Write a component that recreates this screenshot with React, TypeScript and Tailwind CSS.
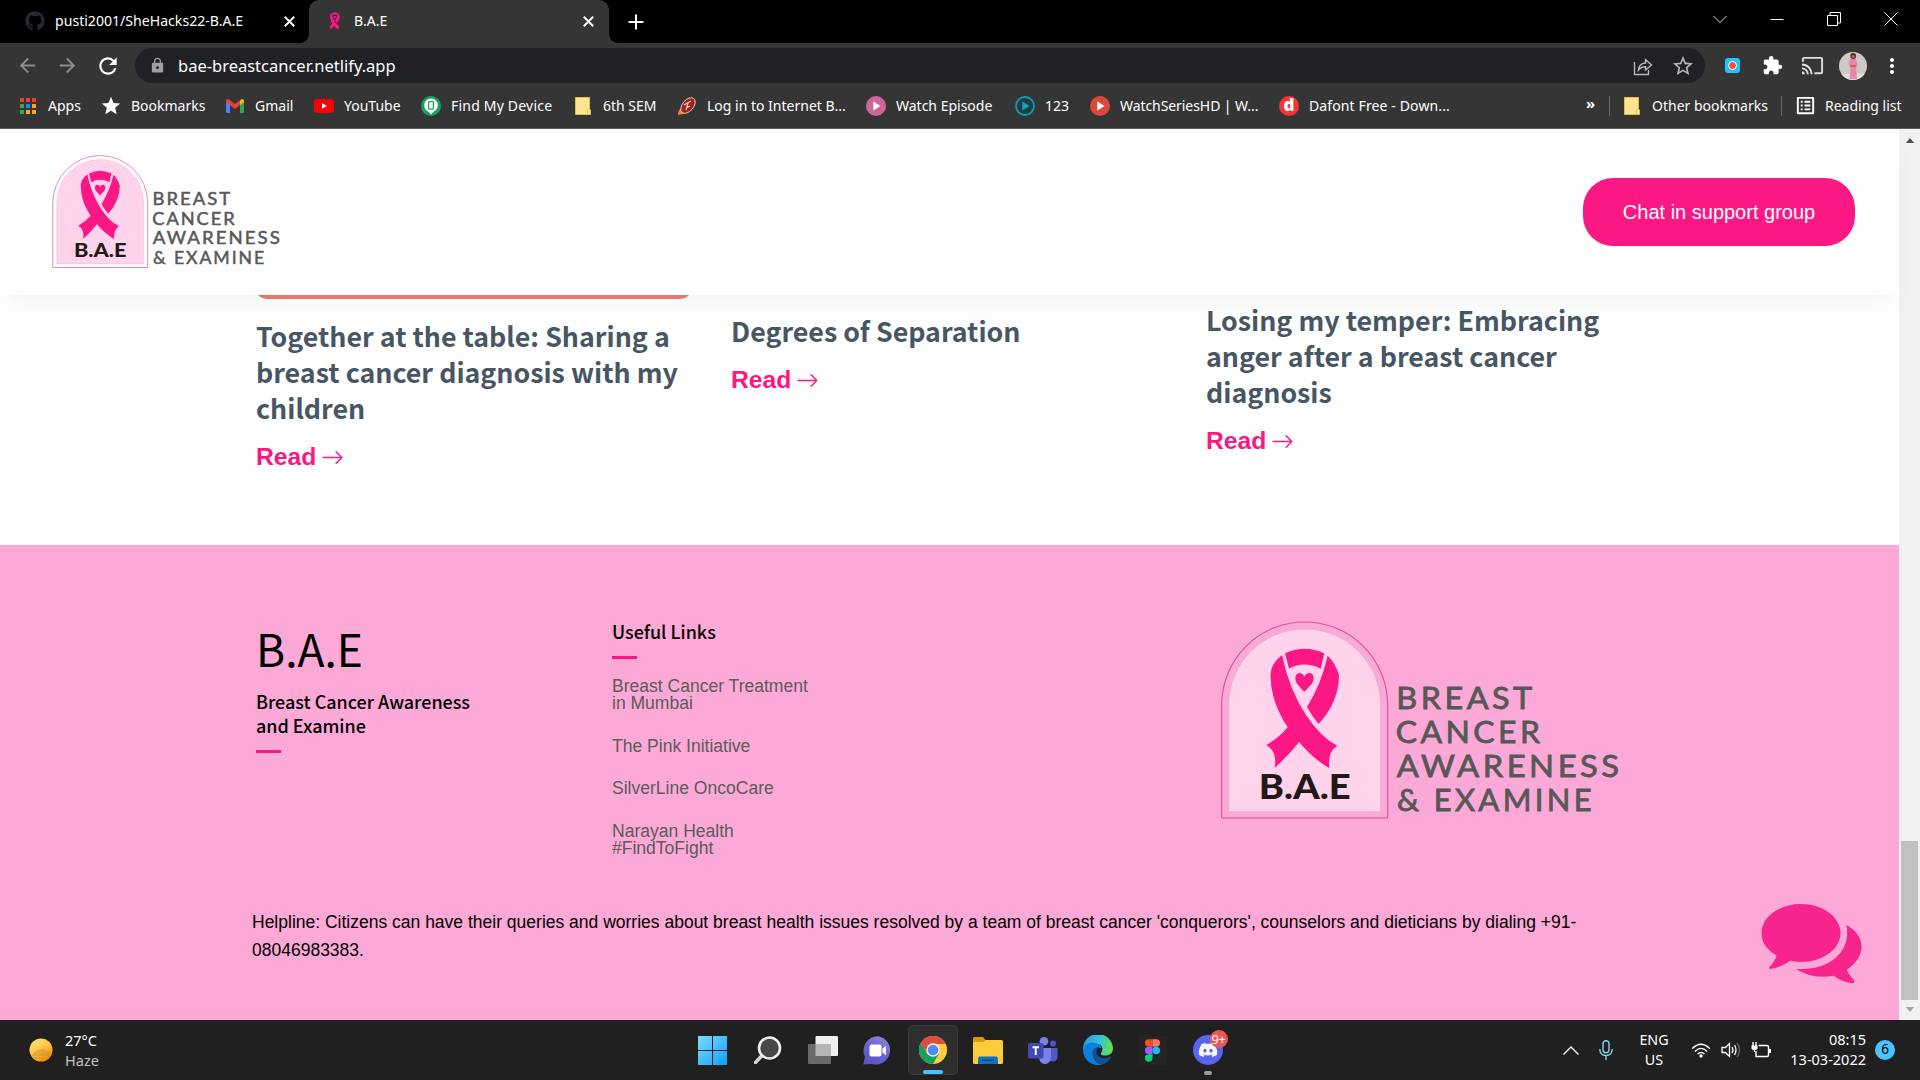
import React from 'react';
import { FaGithub, FaDiscord } from 'react-icons/fa';
import { BsArrowRight } from 'react-icons/bs';
import { MdArrowBack, MdArrowForward, MdRefresh, MdLock, MdStar, MdStarBorder, MdExtension, MdCast, MdMoreVert, MdListAlt } from 'react-icons/md';

function Ribbon() {
  return (
    <g fill="#fb1884">
      <path d="M210 115 Q268 88 328 115 L317 161 Q268 136 222 161 Z" />
      <path d="M201 120 Q163 150 167 188 Q170 290 258 388 Q300 436 343 459 Q337 410 367 392 Q318 368 273 300 Q222 222 201 120 Z" />
      <path d="M338 122 Q362 145 372 180 Q372 260 311 327 Q290 302 276 275 Q318 210 338 122 Z" />
      <path d="M219 336 L253 380 Q222 420 179 459 Q188 410 154 390 Q190 370 219 336 Z" />
      <path d="M268 230 C250 213 241 203 241 189 C241 171 262 169 268 185 C275 169 296 171 296 189 C296 203 286 213 268 230 Z" />
    </g>
  );
}

const LOGO_LINES: [string, number, number, number][] = [
  ['BREAST', 544, 283, 418],
  ['CANCER', 542, 384, 443],
  ['AWARENESS', 545, 487, 678],
  ['& EXAMINE', 546, 588, 594],
];

function Logo({ className }: { className: string }) {
  return (
    <svg viewBox="0 0 1260 630" className={className}>
      <path d="M20 609 V270 A249 249 0 0 1 518 270 V609 Z" fill="none" stroke="#d4579a" strokeWidth="3.5" />
      <path d="M41 590 V270 A228 228 0 0 1 497 270 V590 Z" fill="#ffd3eb" stroke="#d9a0c4" strokeWidth="1.5" />
      <Ribbon />
      <text x="131" y="552" textLength="276" lengthAdjust="spacingAndGlyphs" fill="#1f1a17" className="font-['Lato'] text-[100px] font-black">B.A.E</text>
      {LOGO_LINES.map(([t, x, y, w]) => (
        <text key={t} x={x} y={y} textLength={w} lengthAdjust="spacingAndGlyphs" fill="#585858" stroke="#585858" strokeWidth="2.6" className="font-['Lato'] text-[92px] font-normal tracking-[10px]">{t}</text>
      ))}
    </svg>
  );
}

function Close() {
  return (
    <svg viewBox="0 0 10 10" className="size-[11px] shrink-0" stroke="#fff" strokeWidth="1.7"><path d="M.7 .7 9.3 9.3M9.3 .7 .7 9.3" /></svg>
  );
}

function TabStrip() {
  return (
    <div className="flex h-[43px] items-stretch bg-black">
      <div className="flex w-[299px] items-center pl-[25px] pb-px">
        <FaGithub className="size-5 text-[#24292f]" />
        <span className="ml-[10px] w-[229px] pb-px text-[14.1px]">pusti2001/SheHacks22-B.A.E</span>
        <Close />
      </div>
      <svg viewBox="0 0 10 43" className="w-[10px]" fill="#353535"><path d="M10 43H0Q10 43 10 32Z" /></svg>
      <div className="flex w-[300px] items-center rounded-t-[10px] bg-[#353535] pl-[18px] pb-px">
        <svg viewBox="150 95 225 370" className="h-[18px] w-[15px]"><Ribbon /></svg>
        <span className="ml-3 w-[229px] pb-px text-[14px]">B.A.E</span>
        <Close />
      </div>
      <svg viewBox="0 0 10 43" className="w-[10px]" fill="#353535"><path d="M0 43H10Q0 43 0 32Z" /></svg>
      <div className="flex flex-1 items-center pl-[9px]">
        <svg viewBox="0 0 16 16" className="size-4" stroke="#fff" strokeWidth="2"><path d="M8 .5V15.5M.5 8H15.5" /></svg>
      </div>
      <div className="flex items-center gap-[43px] pr-[22px] pb-[6px]">
        <svg viewBox="0 0 14 14" className="size-[14px]" stroke="#ddd" fill="none"><path d="M.5 4 7 10.5 13.5 4" /></svg>
        <svg viewBox="0 0 14 14" className="size-[14px]" stroke="#fff"><path d="M.5 7.5H13.5" /></svg>
        <svg viewBox="0 0 14 14" className="size-[14px]" stroke="#fff" fill="none"><path d="M.5 3.5H10.5V13.5H.5ZM3 3.500V.5H13.500V11H10.5" /></svg>
        <svg viewBox="0 0 14 14" className="size-[14px]" stroke="#fff" fill="none"><path d="M.5 .5 13.5 13.500M13.500 .5 .5 13.5" /></svg>
      </div>
    </div>
  );
}

function Toolbar() {
  return (
    <div className="flex h-[45px] items-center pl-4">
      <MdArrowBack className="size-[23px] text-[#8c8c8c]" />
      <MdArrowForward className="ml-[17px] size-[23px] text-[#8c8c8c]" />
      <MdRefresh className="ml-[16px] size-[26px]" />
      <div className="ml-[14px] flex h-[35px] w-[1570px] items-center rounded-full bg-[#202124] pl-[14px] pr-[10px]">
        <MdLock className="size-[17px] text-[#9aa0a6]" />
        <span className="ml-3 flex-1 pt-px text-[16.5px]">bae-breastcancer.netlify.app</span>
        <svg viewBox="0 0 20 20" className="size-5" fill="none" stroke="#b5b8bc" strokeWidth="1.4">
          <path d="M1.500 6V18.500H15.500V14" /><path d="M5.500 14Q6 7.500 12.500 7V3.500L18.500 9 12.500 14V10.700Q8 10.700 5.500 14Z" />
        </svg>
        <MdStarBorder className="ml-[18px] size-[24px] text-[#b5b8bc]" />
      </div>
      <div className="ml-5 flex size-[15px] items-center justify-center rounded-[3px] bg-[#1fc4fb]">
        <div className="size-[9px] rounded-full border-[1.5px] border-white bg-[#f4513b]" />
      </div>
      <MdExtension className="ml-[22px] size-[21px]" />
      <MdCast className="ml-[18px] size-[23px] text-[#dedede]" />
      <svg viewBox="0 0 28 28" className="ml-[15px] size-7 rounded-full">
        <rect width="28" height="28" fill="#cfc8c6" />
        <rect y="22" width="28" height="6" fill="#e5dfdc" />
        <path d="M11 7Q14 5 17 7L18.500 13 17 17 18 27H10.500L11.500 16 9.500 12Z" fill="#ea86ad" />
        <path d="M11.500 13H17V15H11.500Z" fill="#b4685f" />
        <circle cx="14.200" cy="4" r="2.900" fill="#4a2f2b" /><circle cx="14.200" cy="4.600" r="1.700" fill="#a06c58" />
      </svg>
      <MdMoreVert className="ml-[13px] size-6" />
    </div>
  );
}

const APP_DOTS = ['#ea4335', '#ea4335', '#ea4335', '#34a853', '#1a83ff', '#fbab05', '#34a853', '#fbab05', '#fbab05'];

function Folder() {
  return (
    <svg viewBox="0 0 16 18" className="h-[18px] w-4"><path d="M.5 .5H14.500V12L15.500 13V17.500H.5Z" fill="#ffe48f" stroke="#e3bd52" /><path d="M12.500 17V13.500L14.500 12" fill="none" stroke="#e3bd52" /></svg>
  );
}

function PlayDisc({ disc, ring, arrow }: { disc: string; ring?: string; arrow: string }) {
  return (
    <svg viewBox="0 0 20 20" className="size-5"><circle cx="10" cy="10" r={ring ? 9 : 10} fill={disc} stroke={ring} strokeWidth="1.800" /><path d="M7.300 5.500 14.500 10 7.300 14.500Z" fill={arrow} /></svg>
  );
}

function Bookmark({ className, icon, label }: { className: string; icon: React.ReactNode; label: string }) {
  return (
    <div className={`flex shrink-0 items-center gap-[10px] ${className}`}>
      <div className="flex w-5 shrink-0 justify-center">{icon}</div>
      <span className="whitespace-nowrap pb-px text-[14px]">{label}</span>
    </div>
  );
}

function BookmarkBar() {
  return (
    <div className="flex h-10 items-center pb-[5px] pl-[18px]">
      <Bookmark className="w-[83px]" label="Apps" icon={
        <div className="grid grid-cols-3 gap-[2px]">{APP_DOTS.map((c, i) => <i key={i} className="size-1" style={{ background: c }} />)}</div>
      } />
      <Bookmark className="w-[124px]" label="Bookmarks" icon={<MdStar className="size-[22px] shrink-0" />} />
      <Bookmark className="w-[89px]" label="Gmail" icon={
        <svg viewBox="0 0 18 14" className="h-[14px] w-[18px]">
          <path d="M0 2V12.500Q0 14 1.500 14H4V5Z" fill="#4285f4" /><path d="M18 2V12.500Q18 14 16.500 14H14V5Z" fill="#34a853" />
          <path d="M14 1.500V6L18 3V2Q18 0 16 0Q15 0 14 1.500Z" fill="#fbbc04" /><path d="M0 2Q0 0 2 0Q3 0 4 1.200L9 5 14 1.200V6L9 10 0 3Z" fill="#ea4335" />
        </svg>
      } />
      <Bookmark className="w-[107px]" label="YouTube" icon={
        <svg viewBox="0 0 20 14" className="h-[14px] w-5"><rect width="20" height="14" rx="3.500" fill="#f00" /><path d="M8 4.200 13 7 8 9.800Z" fill="#fff" /></svg>
      } />
      <Bookmark className="w-[152px] tracking-[0.2px]" label="Find My Device" icon={
        <svg viewBox="0 0 20 20" className="size-5"><circle cx="10" cy="10" r="10" fill="#1aa260" /><circle cx="10" cy="9.300" r="6.800" fill="#fff" /><path d="M6 14 10 18.500 14 14Z" fill="#fff" /><rect x="7.600" y="5.600" width="4.800" height="7.600" rx=".6" fill="none" stroke="#1aa260" strokeWidth="1.200" /></svg>
      } />
      <Bookmark className="w-[104px]" label="6th SEM" icon={<Folder />} />
      <Bookmark className="w-[189px]" label="Log in to Internet B..." icon={
        <svg viewBox="0 0 18 18" className="size-[18px]"><path d="M0 18Q0 13 4 10L9 15Q5 18 0 18Z" fill="#f08a24" /><ellipse cx="10" cy="8.500" rx="9" ry="5.600" transform="rotate(-50 10 8.500)" fill="#a3211d" stroke="#f0c8bc" strokeWidth=".9" /><path d="M6 8 13 4M10 6 8 13M12 9 8 11" stroke="#e8d0cc" strokeWidth="1.200" /></svg>
      } />
      <Bookmark className="w-[149px]" label="Watch Episode" icon={<PlayDisc disc="#cf659b" arrow="#fff" />} />
      <Bookmark className="w-[75px]" label="123" icon={<PlayDisc disc="#243c44" ring="#0f9db5" arrow="#13a5be" />} />
      <Bookmark className="w-[189px] tracking-[-0.07px]" label="WatchSeriesHD | W..." icon={<PlayDisc disc="#dc483c" arrow="#fff" />} />
      <Bookmark className="w-[307px] tracking-[0.12px]" label="Dafont Free - Down..." icon={
        <div className="flex size-5 items-center justify-center rounded-full bg-[#f83333] font-['Open_Sans'] text-[17px] leading-none font-extrabold"><span className="-mt-[3px]">d</span></div>
      } />
      <span className="-mt-1 w-[23px] text-[15px] leading-none font-bold">»</span>
      <div className="h-5 w-px bg-[#6a6a6a]" />
      <Bookmark className="ml-[12px] w-[159px]" label="Other bookmarks" icon={<Folder />} />
      <div className="h-5 w-px bg-[#6a6a6a]" />
      <Bookmark className="ml-[13px]" label="Reading list" icon={<MdListAlt className="size-[23px] shrink-0" />} />
    </div>
  );
}

function Article({ className, title }: { className?: string; title: string }) {
  return (
    <div className={`w-[475px] pr-8 ${className ?? ''}`}>
      <h3 className="font-['Noto_Sans_CJK_JP',sans-serif] text-[26.8px] leading-9 font-bold text-[#485664]">{title}</h3>
      <a className="mt-[13px] flex h-9 items-center gap-[5px] text-[24.7px] font-bold text-[#fb1884]">Read <BsArrowRight className="size-[23px]" /></a>
    </div>
  );
}

const LINKS = ['Breast Cancer Treatment in Mumbai', 'The Pink Initiative', 'SilverLine OncoCare', 'Narayan Health #FindToFight'];

function ChatBubbles() {
  return (
    <svg viewBox="0 0 101 80" className="mt-[359px] ml-[113px] h-20 w-[101px] shrink-0" fill="#f6258d">
      <path d="M40 0C62 0 79.500 13 79.500 29S62 58 40 58Q34.500 58 29.500 56.700Q20 63.500 9 65Q7.500 64.500 8.500 62.500Q13 59 15.500 51.500Q.5 43 .5 29C.5 13 18 0 40 0Z" />
      <path d="M85.500 21Q100.500 29.500 100.500 43Q100.500 55.500 86 65.500Q87 70 92.500 75.500Q94.500 79 91.500 79.300Q82 78.500 72.500 71.700Q51 75.500 35 65Q61 66 75 53.500Q89 41 85.500 21Z" />
    </svg>
  );
}

function Page() {
  return (
    <div className="flex h-[891px] bg-[#fefefe] font-['Liberation_Sans',sans-serif]">
      <div className="w-[1899px]">
        <header className="relative z-10 flex h-[166px] items-center justify-between bg-[#fefefe] pr-[44px] pl-[49px] shadow-[0_14px_26px_-10px_rgba(70,100,100,0.08)]">
          <Logo className="-mt-px h-[121px] w-[240px]" />
          <button className="h-[68px] w-[272px] rounded-[30px] bg-[#fb1884] text-[20px] text-white">Chat in support group</button>
        </header>
        <main className="flex h-[250px] items-start pl-[256px]">
          <div className="w-[475px]">
            <div className="h-1 w-[435px] overflow-hidden"><div className="-mt-10 h-11 rounded-[10px] bg-[#ec7b70]" /></div>
            <Article className="pt-[19px]" title="Together at the table: Sharing a breast cancer diagnosis with my children" />
          </div>
          <Article className="pt-[18px]" title="Degrees of Separation" />
          <Article className="pt-[7px]" title="Losing my temper: Embracing anger after a breast cancer diagnosis" />
        </main>
        <footer className="flex h-[475px] bg-[#fda9d7] pl-[256px]">
          <div className="w-[1392px]">
            <div className="flex h-[340px] items-start font-['Noto_Sans_CJK_JP',sans-serif] text-black">
              <div className="w-[356px] pt-[75px]">
                <h2 className="text-[44.4px] leading-[56px]">B.A.E</h2>
                <h4 className="mt-[13px] w-[230px] text-[17.95px] leading-6 font-medium">Breast Cancer Awareness and Examine</h4>
                <div className="mt-[13px] h-[3px] w-[25px] bg-[#fb1884]" />
              </div>
              <div className="w-[603px] pt-[74px]">
                <h4 className="text-[17.95px] leading-6 font-medium">Useful Links</h4>
                <div className="mt-[13px] h-[3px] w-[25px] bg-[#fb1884]" />
                <ul className="mt-[19px] flex w-[210px] flex-col gap-[25.5px] font-['Liberation_Sans',sans-serif] text-[17.55px] leading-[17px] text-[#5b5b5b]">
                  {LINKS.map((l) => <li key={l}>{l}</li>)}
                </ul>
              </div>
              <Logo className="mt-[70px] h-[210px] w-[420px]" />
            </div>
            <p className="mt-[24px] -ml-1 w-[1345px] text-[17.5px] leading-[27.5px] text-black">Helpline: Citizens can have their queries and worries about breast health issues resolved by a team of breast cancer 'conquerors', counselors and dieticians by dialing +91-08046983383.</p>
          </div>
          <ChatBubbles />
        </footer>
      </div>
      <div className="flex w-[21px] flex-col items-center bg-[#f1f1f1]">
        <svg viewBox="0 0 10 6" className="mt-[9px] h-[5px] w-[10px]" fill="#505050"><path d="M0 6 5 0 10 6Z" /></svg>
        <div className="mt-[698px] h-[159px] w-[17px] bg-[#c1c1c1]" />
        <svg viewBox="0 0 10 6" className="mt-[7px] h-[5px] w-[10px]" fill="#a3a3a3"><path d="M0 0 5 6 10 0Z" /></svg>
      </div>
    </div>
  );
}

function TaskIcon({ children }: { children: React.ReactNode }) {
  return <div className="flex h-full w-[55px] items-center justify-center">{children}</div>;
}

function Taskbar() {
  return (
    <div className="flex h-[60px] items-center bg-[#202020]">
      <div className="flex w-[685px] items-center pl-7">
        <svg viewBox="0 0 26 24" className="h-6 w-[26px]">
          <defs><linearGradient id="sun" x1="0" y1="0" x2=".6" y2="1"><stop offset="0" stopColor="#ffe680" /><stop offset=".5" stopColor="#ffc94a" /><stop offset="1" stopColor="#f59300" /></linearGradient></defs>
          <circle cx="13" cy="12" r="11.500" fill="url(#sun)" />
          <path d="M4 17Q7 12 12 12Q14 9.500 17 12Q22 13 24 16Q25.500 17.500 22 18H3Q2 18 4 17Z" fill="#c98f3d" opacity=".5" /><path d="M5 20H21" stroke="#c98f3d" strokeWidth="1.500" opacity=".5" />
        </svg>
        <div className="ml-[11px] text-[14.5px] leading-5"><div>27°C</div><div className="text-[#c4c4c4]">Haze</div></div>
      </div>
      <TaskIcon>
        <svg viewBox="0 0 29 29" className="size-[29px]">
          <defs><linearGradient id="win" x1="0" y1="0" x2="1" y2="1"><stop offset="0" stopColor="#7fdcff" /><stop offset="1" stopColor="#0aa0fb" /></linearGradient></defs>
          <path d="M0 0H14V14H0ZM15 0H29V14H15ZM0 15H14V29H0ZM15 15H29V29H15Z" fill="url(#win)" />
        </svg>
      </TaskIcon>
      <TaskIcon>
        <svg viewBox="0 0 28 28" className="size-7" fill="#474747"><path d="M1.500 26.500 9 18.500" stroke="#d2d5d8" strokeWidth="3.500" strokeLinecap="round" /><circle cx="15.500" cy="12" r="10.500" stroke="#eceeef" strokeWidth="2.600" /></svg>
      </TaskIcon>
      <TaskIcon>
        <svg viewBox="0 0 30 28" className="h-7 w-[30px]"><rect x="7.500" width="22.500" height="20" rx="1" fill="#efefef" /><rect y="8" width="23" height="20" rx="1" fill="#6a6a6a" /><path d="M7.500 8H23V20H7.500Z" fill="#b5b5b5" /></svg>
      </TaskIcon>
      <TaskIcon>
        <svg viewBox="0 0 29 29" className="size-[29px]">
          <defs><linearGradient id="chat" x1=".8" y1="0" x2=".2" y2="1"><stop offset="0" stopColor="#8d85d0" /><stop offset=".5" stopColor="#6a63d2" /><stop offset="1" stopColor="#5a55c4" /></linearGradient></defs>
          <path d="M15 .3A14.200 14.200 0 1 1 9 28L.3 28.500 2 21A14.200 14.200 0 0 1 15 .3Z" fill="url(#chat)" />
          <rect x="6.500" y="8.500" width="12" height="12" rx="2" fill="#fff" /><path d="M19.500 12.500 23 9.800V19.200L19.500 16.500Z" fill="#fff" />
        </svg>
      </TaskIcon>
      <TaskIcon>
        <div className="relative flex h-[50px] w-[50px] items-center justify-center rounded-[5px] border border-[#3a3a3a] bg-[#2e2e2e]">
          <svg viewBox="0 0 48 48" className="mt-[-1px] size-7">
            <circle cx="24" cy="24" r="24" fill="#ffcd40" />
            <path d="M3.200 12A24 24 0 0 1 44.800 12L45.500 13.500H24L13.600 30Z" fill="#dc4e41" />
            <path d="M3.200 12A24 24 0 0 0 24 48L34.400 30 24 34 13.600 30Z" fill="#17a05d" />
            <circle cx="24" cy="24" r="11.500" fill="#f1f1f1" /><circle cx="24" cy="24" r="9" fill="#4c8bf5" />
          </svg>
          <div className="absolute bottom-0 h-1 w-5 rounded-full bg-[#4cc2ff]" />
        </div>
      </TaskIcon>
      <TaskIcon>
        <svg viewBox="0 0 30 27" className="h-[27px] w-[30px]">
          <path d="M0 1.500Q0 0 1.500 0H10L13 3.500V7H0Z" fill="#dd9a05" /><path d="M0 5H10L13 3H28.500Q30 3 30 4.500V25.500Q30 27 28.500 27H1.500Q0 27 0 25.500Z" fill="#fdcb3c" />
          <path d="M5 27V21.500Q5 19.500 7 19.500H23Q25 19.500 25 21.500V27Z" fill="#0e72c4" /><path d="M9 23.300H21" stroke="#08427a" strokeWidth="1.300" />
        </svg>
      </TaskIcon>
      <TaskIcon>
        <svg viewBox="0 0 30 27" className="h-[27px] w-[30px]">
          <circle cx="25" cy="6.500" r="3" fill="#5059c9" /><path d="M20 11H29.500V20Q29 24.500 24 24.500L20 24Z" fill="#5059c9" />
          <circle cx="16" cy="4.300" r="4.300" fill="#7b83eb" /><path d="M11 11H23V20Q22.500 27 17 27Q11.500 27 11 20Z" fill="#7b83eb" />
          <rect y="6" width="15.500" height="15.500" rx="1.500" fill="#4249b0" /><path d="M4.500 10.300H11M7.750 10.300V18" stroke="#fff" strokeWidth="1.900" />
        </svg>
      </TaskIcon>
      <TaskIcon>
        <svg viewBox="0 0 30 30" className="size-[30px]">
          <defs><linearGradient id="edgeA" x1="0" y1=".3" x2="1" y2=".5"><stop offset="0" stopColor="#2a9fe0" /><stop offset=".5" stopColor="#2fc2df" /><stop offset="1" stopColor="#66e04f" /></linearGradient></defs>
          <path d="M0 15A15 15 0 0 1 30 13Q30 20 23 20.500Q17 20.500 18 18Q20.500 15 18.500 11Q12 5 0 15Z" fill="url(#edgeA)" />
          <path d="M0 15Q2 7 10 7.500Q17 8 18.500 13Q11 11 10 18Q10 27 19 29.500A15 15 0 0 1 0 15Z" fill="#0f7fdc" />
          <path d="M13 12.500Q8.500 15 9.500 20Q12 30 19 29.500Q25 28 28 22.500Q28 21.500 27 22Q20 25 15 21Q11.500 17 15 13Z" fill="#124f9c" />
        </svg>
      </TaskIcon>
      <TaskIcon>
        <div className="flex size-[29px] items-center justify-center bg-[#242424]">
          <svg viewBox="0 0 16 24" className="h-[23px] w-[15px]"><path d="M8 0H4A4 4 0 0 0 4 8H8Z" fill="#f24e1e" /><path d="M8 0H12A4 4 0 0 1 12 8H8Z" fill="#ff7262" /><path d="M8 8H4A4 4 0 0 0 4 16H8Z" fill="#a259ff" /><circle cx="12" cy="12" r="4" fill="#1abcfe" /><path d="M8 16H4A4 4 0 1 0 8 20Z" fill="#0acf83" /></svg>
        </div>
      </TaskIcon>
      <TaskIcon>
        <div className="relative flex size-[50px] items-center justify-center">
          <div className="flex size-[30px] items-center justify-center rounded-full bg-[#5865f2]"><FaDiscord className="size-5" /></div>
          <div className="absolute top-[5px] right-[5px] flex size-[18px] items-center justify-center rounded-full bg-[#ed5555] text-[13px] leading-none tracking-tight">9+</div>
          <div className="absolute bottom-0 h-1 w-2 rounded-full bg-[#9a9a9a]" />
        </div>
      </TaskIcon>
      <div className="flex flex-1 items-center justify-end pr-[25px]">
        <svg viewBox="0 0 16 9" className="h-[9px] w-4" fill="none" stroke="#fff" strokeWidth="1.300"><path d="M.5 8.500 8 1 15.500 8.500" /></svg>
        <svg viewBox="0 0 14 20" className="ml-5 h-5 w-[14px]" fill="none" stroke="#83d3e6" strokeWidth="1.400"><rect x="4" y=".7" width="6" height="12" rx="3" /><path d="M.8 9Q.8 15.500 7 15.500Q13.200 15.500 13.200 9M7 15.500V20" /></svg>
        <div className="ml-[26px] w-[30px] text-center text-[14.3px] leading-5"><div>ENG</div><div>US</div></div>
        <svg viewBox="0 0 20 16" className="ml-[22px] h-[15px] w-5" fill="none" stroke="#fff" strokeWidth="1.500"><path d="M.6 6Q10-3.500 19.400 6M3.500 9Q10 2.500 16.500 9M6.300 11.800Q10 8.300 13.700 11.800" /><circle cx="10" cy="13.800" r="1.800" fill="#fff" stroke="none" /></svg>
        <svg viewBox="0 0 20 16" className="ml-[10px] h-4 w-5" fill="none" stroke="#fff" strokeWidth="1.300"><path d="M1 5.500H4.500L8.500 1.500V14.500L4.500 10.500H1Z" /><path d="M11 5Q13 8 11 11M13.500 3Q16.500 8 13.500 13" /><path d="M16 1Q21 8 16 15" stroke="#666" /></svg>
        <svg viewBox="0 0 20 16" className="ml-[10px] h-4 w-5" fill="none" stroke="#fff" strokeWidth="1.400"><path d="M7.500 3.500H16Q17.500 3.500 17.500 5V13Q17.500 14.500 16 14.500H5V9" /><path d="M19 7V11" strokeWidth="2" /><path d="M.5 3.500H6.500V6.500Q6 8 3.500 8Q1 8 .5 6.500Z" fill="#fff" stroke="none" /><path d="M2 0V4M5 0V4M3.500 7V10" /></svg>
        <div className="-mt-[2px] ml-[18px] w-[77px] text-right text-[14.5px] leading-5 whitespace-nowrap"><div>08:15</div><div>13-03-2022</div></div>
        <div className="ml-[9px] flex size-5 items-center justify-center rounded-full bg-[#4cc2ff] text-[13.5px] leading-none text-black">6</div>
      </div>
    </div>
  );
}

export default function App() {
  return (
    <div className="h-[1080px] w-[1920px] overflow-hidden bg-[#353535] font-['Noto_Sans',sans-serif] text-white">
      <TabStrip />
      <Toolbar />
      <BookmarkBar />
      <div className="h-px bg-[#5c5c5c]" />
      <Page />
      <Taskbar />
    </div>
  );
}
